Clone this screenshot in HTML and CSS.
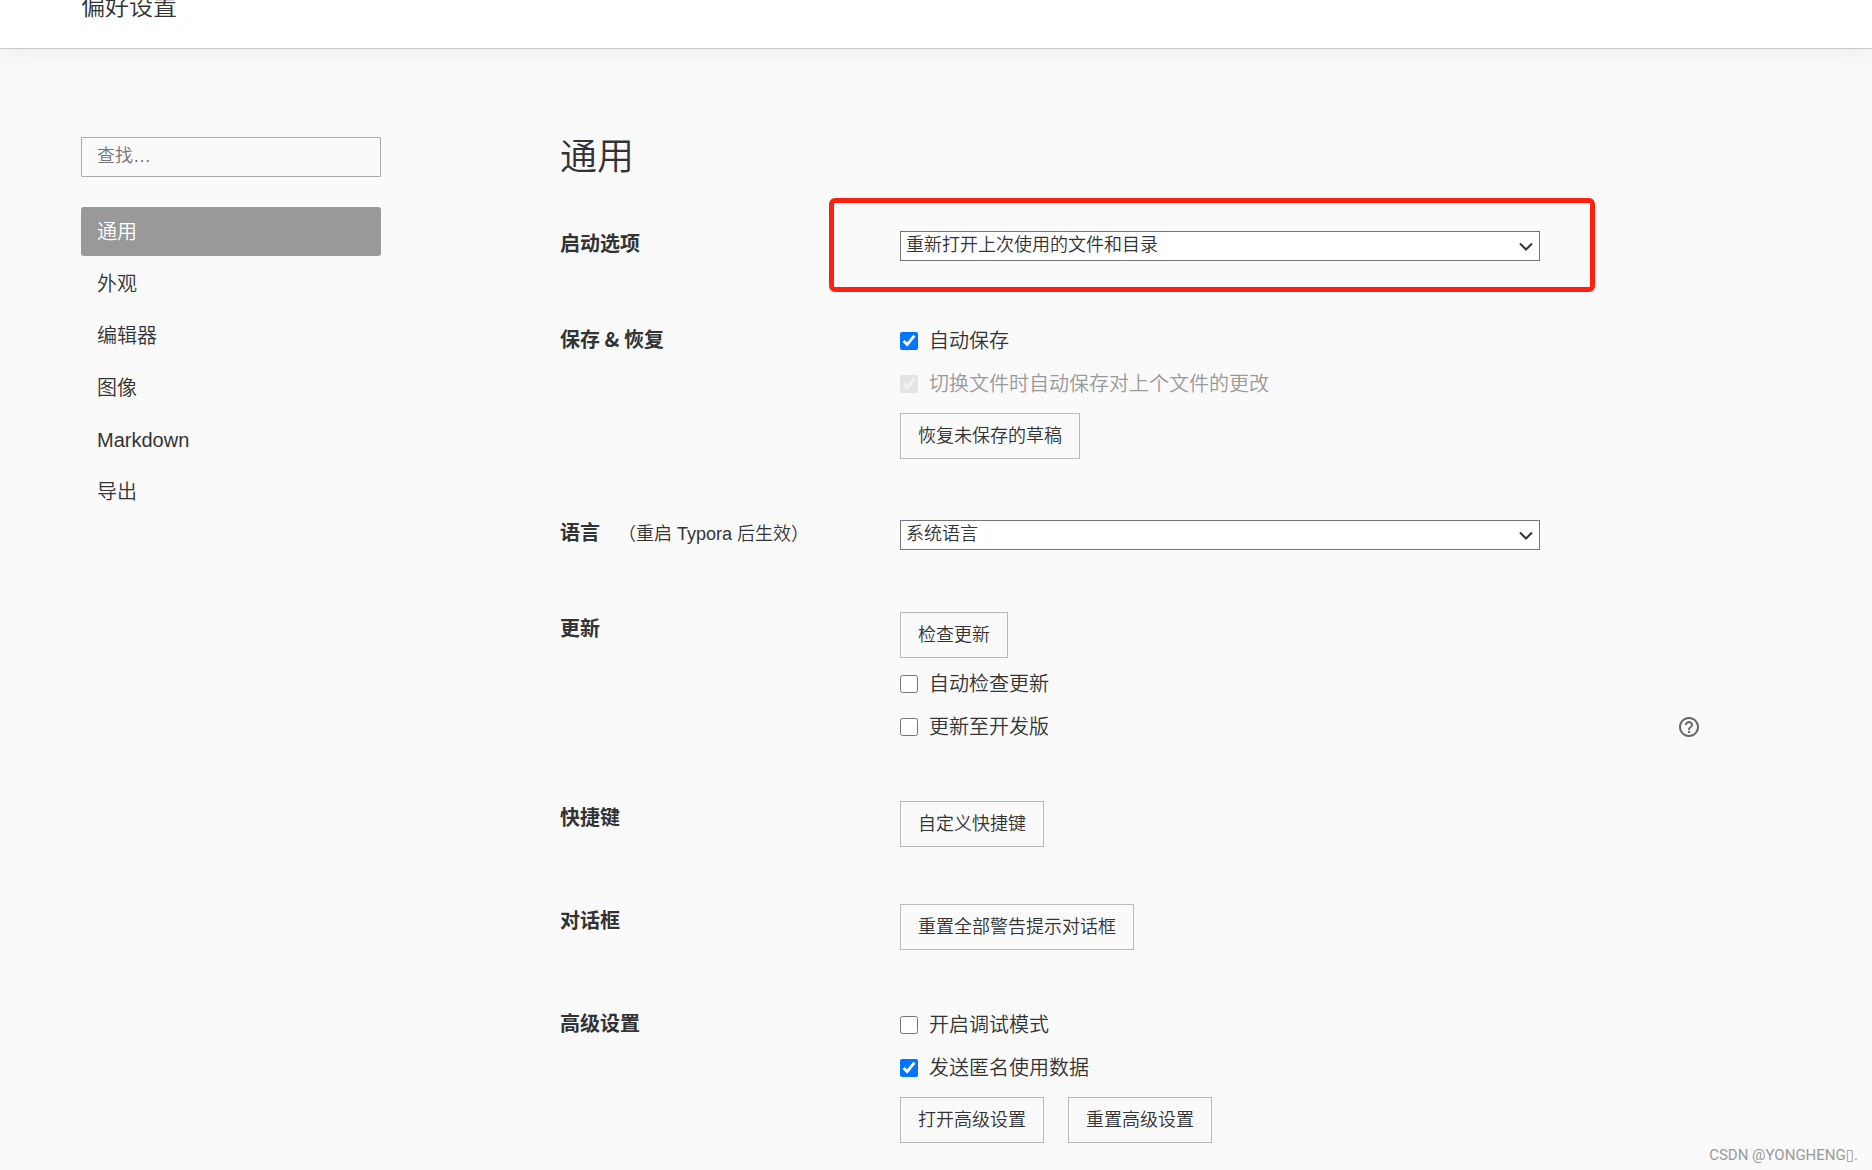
FILE: index.html
```html
<!DOCTYPE html>
<html lang="zh-CN">
<head>
  <meta charset="utf-8">
  <meta name="viewport" content="width=device-width, initial-scale=1">
  <title>偏好设置</title>
  <link rel="stylesheet" href="styles.css">
</head>
<body>
  <header class="page-header">
    <h1 class="page-title">偏好设置</h1>
  </header>

  <main class="layout">
    <aside class="sidebar">
      <input class="search" type="search" placeholder="查找…" aria-label="查找">
      <nav class="nav">
        <a class="nav-item active" href="#general">通用</a>
        <a class="nav-item" href="#appearance">外观</a>
        <a class="nav-item" href="#editor">编辑器</a>
        <a class="nav-item" href="#image">图像</a>
        <a class="nav-item" href="#markdown">Markdown</a>
        <a class="nav-item" href="#export">导出</a>
      </nav>
    </aside>

    <section class="panel" id="general">
      <h2 class="panel-title">通用</h2>

      <div class="row">
        <label class="row-label" for="launch">启动选项</label>
        <div class="controls">
          <div class="select-wrap highlighted">
            <select class="select" id="launch">
              <option>重新打开上次使用的文件和目录</option>
            </select>
            <svg class="chevron" viewBox="0 0 14 10" width="14" height="10" aria-hidden="true"><path d="M1 1.500 7 7.500 13 1.500" fill="none" stroke="currentColor" stroke-width="2"/></svg>
          </div>
        </div>
      </div>

      <div class="row">
        <h3 class="row-label">保存 &amp; 恢复</h3>
        <div class="controls">
          <label class="check"><input type="checkbox" checked>自动保存</label>
          <label class="check disabled"><input type="checkbox" checked disabled>切换文件时自动保存对上个文件的更改</label>
          <div class="actions"><button class="button" type="button">恢复未保存的草稿</button></div>
        </div>
      </div>

      <div class="row">
        <label class="row-label" for="language">语言<span class="note">（重启 Typora 后生效）</span></label>
        <div class="controls">
          <div class="select-wrap">
            <select class="select" id="language">
              <option>系统语言</option>
            </select>
            <svg class="chevron" viewBox="0 0 14 10" width="14" height="10" aria-hidden="true"><path d="M1 1.500 7 7.500 13 1.500" fill="none" stroke="currentColor" stroke-width="2"/></svg>
          </div>
        </div>
      </div>

      <div class="row">
        <h3 class="row-label">更新</h3>
        <div class="controls">
          <div class="actions"><button class="button" type="button">检查更新</button></div>
          <label class="check"><input type="checkbox">自动检查更新</label>
          <div class="check-line">
            <label class="check"><input type="checkbox">更新至开发版</label>
            <a class="help" href="#help" aria-label="帮助">
              <svg viewBox="0 0 24 24" width="24" height="24" aria-hidden="true"><path fill="currentColor" d="M11 18h2v-2h-2v2zm1-16C6.480 2 2 6.480 2 12s4.480 10 10 10 10-4.480 10-10S17.520 2 12 2zm0 18c-4.410 0-8-3.590-8-8s3.590-8 8-8 8 3.590 8 8-3.590 8-8 8zm0-14c-2.210 0-4 1.790-4 4h2c0-1.100.9-2 2-2s2 .9 2 2c0 2-3 1.750-3 5h2c0-2.250 3-2.500 3-5 0-2.210-1.790-4-4-4z"/></svg>
            </a>
          </div>
        </div>
      </div>

      <div class="row">
        <h3 class="row-label">快捷键</h3>
        <div class="controls">
          <div class="actions"><button class="button" type="button">自定义快捷键</button></div>
        </div>
      </div>

      <div class="row">
        <h3 class="row-label">对话框</h3>
        <div class="controls">
          <div class="actions"><button class="button" type="button">重置全部警告提示对话框</button></div>
        </div>
      </div>

      <div class="row last">
        <h3 class="row-label">高级设置</h3>
        <div class="controls">
          <label class="check"><input type="checkbox">开启调试模式</label>
          <label class="check"><input type="checkbox" checked>发送匿名使用数据</label>
          <div class="actions">
            <button class="button" type="button">打开高级设置</button>
            <button class="button" type="button">重置高级设置</button>
          </div>
        </div>
      </div>
    </section>
  </main>

  <div class="watermark">CSDN @YONGHENG<span class="glyph">▯</span>.</div>
</body>
</html>
```

FILE: styles.css
```css
* {
  box-sizing: border-box;
}

body {
  position: relative;
  min-height: 100vh;
  margin: 0;
  background: #fafafa;
  color: #333;
  font: 350 20px/24px "Liberation Sans", "Noto Sans CJK SC", sans-serif;
}

/* Header */
.page-header {
  display: flex;
  align-items: flex-start;
  height: 48px;
  padding: 0 81px;
  background: #fff;
  box-shadow: 0 1px 1px rgba(0, 0, 0, 0.16), 0 0 28px rgba(0, 0, 0, 0.08);
}

.page-title {
  margin: -13px 0 0;
  font-size: 24px;
  font-weight: 350;
  line-height: 40px;
}

/* Two-column layout */
.layout {
  display: grid;
  grid-template-columns: 300px 1fr;
  column-gap: 179px;
  padding: 85px 172px 20px 81px;
}

.sidebar {
  padding-top: 4px;
}

.search {
  display: block;
  width: 100%;
  height: 40px;
  margin: 0 0 30px;
  padding: 0 15px 2px;
  border: 1px solid #aaa;
  border-radius: 1px;
  background: transparent;
  color: inherit;
  font: inherit;
  font-size: 18px;
  appearance: none;
}

.search::placeholder {
  color: #757575;
}

.nav {
  display: grid;
  row-gap: 3px;
}

.nav-item {
  height: 49px;
  padding: 0 16px;
  border-radius: 3px;
  color: inherit;
  line-height: 50px;
  text-decoration: none;
}

.nav-item.active {
  background: #999;
  color: #fff;
}

/* Settings rows */
.panel-title {
  margin: 0 0 37px;
  font-size: 37px;
  font-weight: 350;
  line-height: 50px;
}

.row {
  display: grid;
  grid-template-columns: 340px 1fr;
  padding-bottom: 46px;
}

.row.last {
  padding-bottom: 0;
}

.row-label {
  margin: 0;
  font-family: "Noto Sans CJK SC", sans-serif;
  font-size: 20px;
  font-weight: 700;
  line-height: 46px;
}

.note {
  margin-left: 18px;
  font-family: "Liberation Sans", "Noto Sans CJK SC", sans-serif;
  font-size: 18px;
  font-weight: 350;
}

.controls {
  padding-top: 3px;
}

.select-wrap {
  position: relative;
  width: 80%;
  margin: 8px 0 9px;
}

/* Red callout frame around the control */
.highlighted::after {
  content: "";
  position: absolute;
  inset: -33px -55px -31px -71px;
  border: 5px solid #ff2010;
  border-radius: 6px;
  pointer-events: none;
}

.select {
  display: block;
  width: 100%;
  height: 30px;
  padding: 0 28px 2px 5px;
  border: 1px solid #767676;
  border-radius: 0;
  background-color: #fff;
  color: inherit;
  font: inherit;
  font-size: 18px;
  appearance: none;
}

.chevron {
  position: absolute;
  top: 11px;
  right: 7px;
  pointer-events: none;
}

.check {
  display: flex;
  align-items: center;
  gap: 11px;
  height: 43px;
  line-height: 26px;
}

.check input {
  width: 18px;
  height: 18px;
  margin: 0;
}

.check.disabled {
  color: #999;
}

.check.disabled input {
  opacity: 0.5;
}

.check-line {
  display: flex;
  align-items: center;
  justify-content: space-between;
}

.help {
  display: flex;
  margin-right: -1px;
  color: #666;
}

.actions {
  display: flex;
  gap: 24px;
  margin: 4px 0;
}

.check + .actions {
  margin-top: 8px;
}

.button {
  height: 46px;
  padding: 0 17px;
  border: 1px solid #bbb;
  border-radius: 0;
  background: transparent;
  color: inherit;
  font: inherit;
  font-size: 18px;
}

/* Corner credit */
.watermark {
  position: absolute;
  right: 14px;
  bottom: 3px;
  color: #999;
  font: 400 15px/24px Roboto, sans-serif;
}

.glyph {
  font-family: "DejaVu Sans", sans-serif;
}
```
